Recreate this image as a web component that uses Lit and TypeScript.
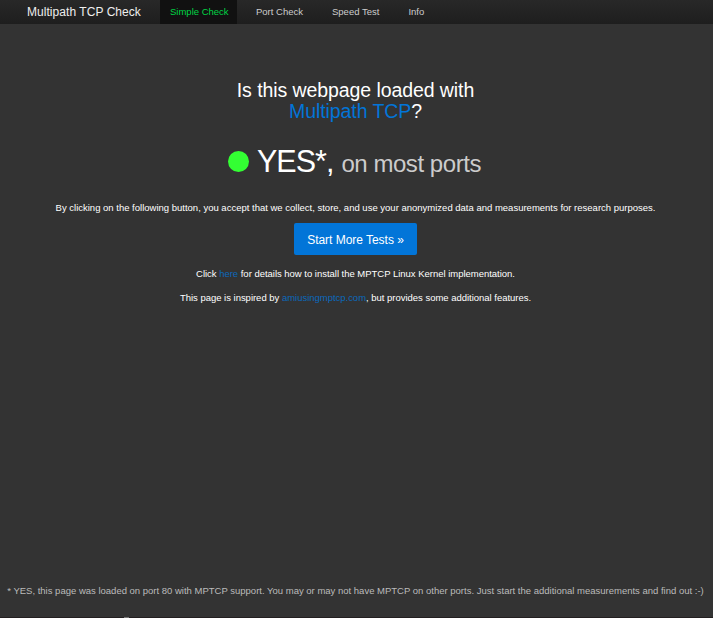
import { LitElement, html, css } from "lit";
import { customElement, state } from "lit/decorators.js";

@customElement("app-root")
export class AppRoot extends LitElement {
  static styles = css`
    :host {
      display: flex;
      flex-direction: column;
      box-sizing: border-box;
      height: 618px;
      overflow: hidden;
      background: #333;
      color: #fff;
      font-family: "Liberation Sans", Arial, sans-serif;
      font-size: 9.5px;
      white-space: nowrap;
      text-align: center;
    }
    nav {
      display: flex;
      height: 24px;
      line-height: 24px;
      flex: none;
      background: linear-gradient(#282828, #1e1e1e);
      text-align: left;
    }
    .brand { width: 133px; padding-left: 27px; font-size: 12px; letter-spacing: 0.05px; color: #eee; }
    .tab { padding: 0 10px; margin-right: 9px; color: #ccc; cursor: pointer; }
    .active { background: #111; color: #00d645; width: 57px; }
    main { display: flex; flex-direction: column; flex: 1; padding-right: 2px; }
    h1 { margin: 56px 0 0; font-size: 19.5px; line-height: 21px; font-weight: 400; letter-spacing: -0.08px; }
    .link { color: #0275d8; }
    p .link { color: #0b69bd; }
    .answer { display: flex; justify-content: center; align-items: baseline; margin-top: 21px; padding-right: 2px; line-height: 36px; font-size: 30.5px; letter-spacing: -1px; }
    .dot { width: 21px; height: 21px; border-radius: 50%; background: #3f3; margin: 0 8px 2px 0; align-self: center; }
    .ports { font-size: 24px; color: #ccc; margin-left: 8px; letter-spacing: -0.45px; }
    p { margin: 0; line-height: 14px; }
    .terms { margin-top: 19px; }
    .button { align-self: center; margin: 8px 0 12px; border: 0; border-radius: 2px; width: 123px; height: 32px; background: #0275d8; color: #fff; font: 12px "Liberation Sans", Arial, sans-serif; letter-spacing: -0.03px; padding: 2px 0 0; }
    .inspired { margin-top: 10px; }
    .details, .inspired { letter-spacing: -0.02px; }
    .note { margin-top: auto; margin-bottom: 19px; color: #bbb; }
    footer { height: 1px; flex: none; background: #231f20; padding-left: 124px; }
    .mark { display: block; width: 5px; height: 1px; background: #777; }
  `;

  @state() private selected = 0;
  private tabs = ["Simple Check", "Port Check", "Speed Test", "Info"];

  render() {
    return html`
      <nav>
        <span class="brand">Multipath TCP Check</span>
        ${this.tabs.map((t, i) => html`<span class="tab ${i === this.selected ? "active" : ""}" @click=${() => (this.selected = i)}>${t}</span>`)}
      </nav>
      <main>
        <h1>Is this webpage loaded with<br /><span class="link">Multipath TCP</span>?</h1>
        <div class="answer"><span class="dot"></span><span>YES*,</span><span class="ports">on most ports</span></div>
        <p class="terms">By clicking on the following button, you accept that we collect, store, and use your anonymized data and measurements for research purposes.</p>
        <button class="button">Start More Tests »</button>
        <p class="details">Click <span class="link">here</span> for details how to install the MPTCP Linux Kernel implementation.</p>
        <p class="inspired">This page is inspired by <span class="link">amiusingmptcp.com</span>, but provides some additional features.</p>
        <p class="note">* YES, this page was loaded on port 80 with MPTCP support. You may or may not have MPTCP on other ports. Just start the additional measurements and find out :-)</p>
      </main>
      <footer><span class="mark"></span></footer>
    `;
  }
}
